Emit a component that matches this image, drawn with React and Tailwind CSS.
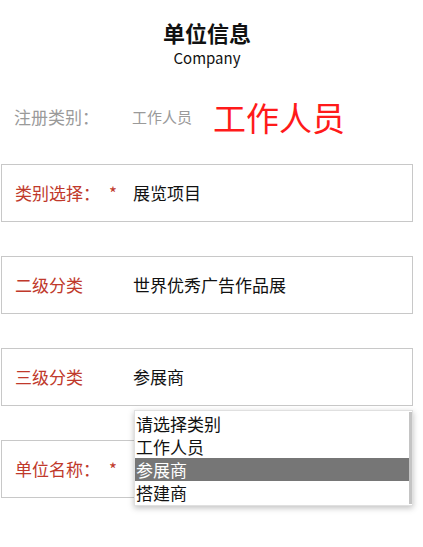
import React from 'react';

const font = { fontFamily: '"Noto Sans CJK SC", "Noto Sans", sans-serif' };

const Field = ({ label, required, value, children }) => (
    <div className="relative">
        <div className="ml-px flex h-[58px] w-[412px] items-center border border-[#c8c8c8] pl-[13px]">
            <span className="w-[118px] shrink-0 text-[17px] text-[#c0392b]">
                {label}
                {required ? <span className="ml-[9px]">*</span> : null}
            </span>
            <span className="text-[17px] text-[#111]">{value}</span>
        </div>
        {children}
    </div>
);

const options = ['请选择类别', '工作人员', '参展商', '搭建商'];

const App = () => {
    return (
        <div className="h-[547px] w-[423px] bg-white" style={font}>
            <div className="ml-px flex w-[412px] flex-col items-center pt-[17px]">
                <div className="text-[22px] font-bold leading-[31px] text-[#111]">单位信息</div>
                <div className="text-[15px] leading-[20px] text-[#111]">Company</div>
            </div>

            <div className="mt-[26px] flex h-[46px] items-center pl-[14px]">
                <span className="w-[118px] text-[17px] text-[#9a9a9a]">注册类别：</span>
                <span className="text-[15px] text-[#9a9a9a]">工作人员</span>
                <span className="ml-[21px] text-[33px] leading-[46px] text-[#ff1a1a]">工作人员</span>
            </div>

            <div className="mt-[24px] flex flex-col gap-[34px]">
                <Field label="类别选择：" required value="展览项目" />
                <Field label="二级分类" value="世界优秀广告作品展" />
                <Field label="三级分类" value="参展商">
                    <div className="absolute left-[134px] top-[62px] z-10 w-[279px] border border-[#e0e0e0] bg-white py-px shadow-[0_2px_6px_rgba(0,0,0,0.25)]">
                        <div className="border-r-[3px] border-[#c4c4c4]">
                            {options.map((opt) => (
                                <div
                                    key={opt}
                                    className={`h-[23px] pl-px text-[17px] leading-[23px] ${opt === '参展商' ? 'bg-[#767676] text-white' : 'text-[#111]'}`}
                                >
                                    {opt}
                                </div>
                            ))}
                        </div>
                    </div>
                </Field>
                <Field label="单位名称：" required value="" />
            </div>
        </div>
    );
};

export default App;
